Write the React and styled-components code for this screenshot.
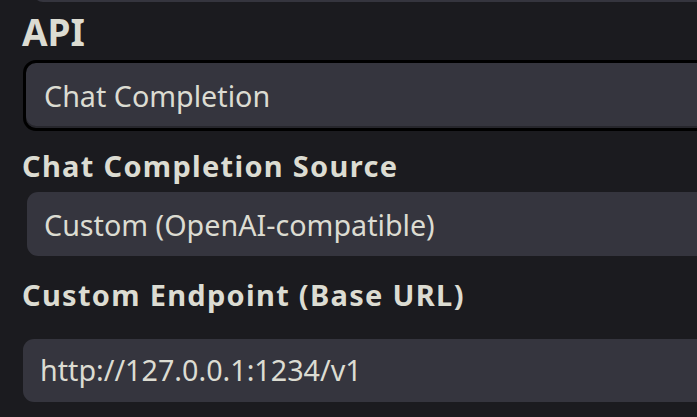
import styled, { createGlobalStyle } from "styled-components";

const GlobalStyle = createGlobalStyle`
  html, body {
    margin: 0;
    padding: 0;
    background: #1b1b1f;
    overflow: hidden;
  }
  body {
    font-family: "Noto Sans", "Open Sans", sans-serif;
    color: rgb(220, 220, 210);
  }
`;

const Panel = styled.div`
  width: 760px;
  padding-left: 22px;
  display: flex;
  flex-direction: column;
  align-items: flex-start;
`;

// tail of the previous control, scrolled mostly out of view
const PrevField = styled.div`
  width: calc(100% - 11px);
  height: 62px;
  margin-top: -60px;
  margin-left: 11px;
  background: #35353e;
  border-radius: 0 0 10px 10px;
`;

const Heading = styled.h3`
  margin: 4px 0 0;
  font-size: 37px;
  font-weight: 700;
  line-height: 52px;
`;

const Label = styled.h4`
  margin: ${(p) => p.$top}px 0 0;
  font-size: 29px;
  font-weight: 700;
  letter-spacing: 1.3px;
  line-height: 38px;
`;

const Field = styled.div`
  box-sizing: border-box;
  width: calc(100% - ${(p) => p.$indent}px);
  margin-top: ${(p) => p.$top}px;
  margin-left: ${(p) => p.$indent}px;
  height: ${(p) => p.$height}px;
  padding: ${(p) => p.$padTop}px 0 0 ${(p) => p.$padLeft}px;
  background: #35353e;
  border-radius: 11px;
  font-size: 28.7px;
  line-height: 38px;
  white-space: nowrap;
`;

const FocusedField = styled(Field)`
  border: 3px solid #000;
  border-radius: 13px;
  box-shadow: inset 0 -2px 0 #26262c;
`;

export default function App() {
  return (
    <>
      <GlobalStyle />
      <Panel>
        <PrevField />
        <Heading>API</Heading>
        <FocusedField $top={2} $indent={1} $height={71} $padTop={14} $padLeft={18}>
          Chat Completion
        </FocusedField>
        <Label $top={16}>Chat Completion Source</Label>
        <Field $top={7} $indent={5} $height={64} $padTop={14} $padLeft={17}>
          Custom (OpenAI-compatible)
        </Field>
        <Label $top={20}>Custom Endpoint (Base URL)</Label>
        <Field $top={25} $indent={1} $height={63} $padTop={12} $padLeft={17}>
          http://127.0.0.1:1234/v1
        </Field>
      </Panel>
    </>
  );
}
